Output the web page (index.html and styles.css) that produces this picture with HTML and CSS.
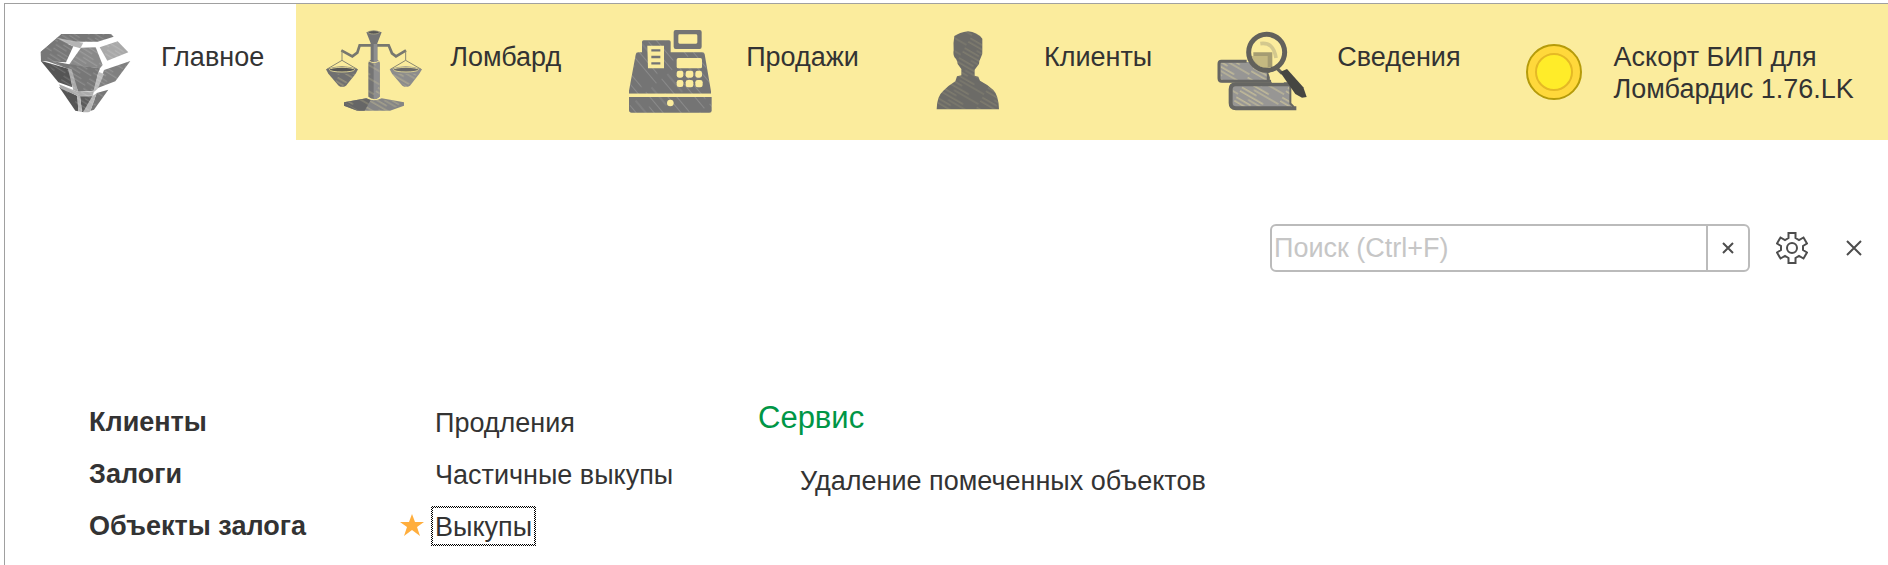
FILE: index.html
```html
<!DOCTYPE html>
<html lang="ru">
<head>
  <meta charset="UTF-8">
  <meta name="viewport" content="width=device-width, initial-scale=1.0">
  <title>Ломбард</title>
  <link rel="stylesheet" href="styles.css">
</head>
<body>
  <div class="window">
    <nav class="sections">
      <a class="section active" href="#main">
        <svg class="section-icon" viewBox="108 72 288 288" aria-hidden="true">
          <defs>
            <pattern id="hatch" width="70" height="34" patternUnits="userSpaceOnUse" patternTransform="rotate(32)">
              <path d="M0 5H50M20 15H70M0 26H38" stroke="#fff" stroke-width="2" opacity=".28"/>
            </pattern>
            <pattern id="hatchSteep" width="150" height="62" patternUnits="userSpaceOnUse" patternTransform="rotate(50)">
              <path d="M0 10H130M40 31H150M0 50H70" stroke="#fff" stroke-width="3" opacity=".16"/>
            </pattern>
            <pattern id="hatchYellow" width="120" height="34" patternUnits="userSpaceOnUse" patternTransform="rotate(30)">
              <path d="M0 6H80M35 17H120M0 28H50" stroke="#fbec9d" stroke-width="3" opacity=".55"/>
            </pattern>
          </defs>
          <path d="M119 156L181 102H330L338 110L290 125H228Z" fill="#777"/>
          <path d="M119 156L165 117L217 139L195 187L120 183Z" fill="#777"/>
          <path d="M165 113L247 128L238 145L216 139Z" fill="#b5b5b5"/>
          <path d="M240 143L284 142L305 195L297 205L204 194Z" fill="#898989"/>
          <path d="M296 142L350 124L382 157L319 182Z" fill="#a9a9a9"/>
          <path d="M119 182L205 207L214 262L172 247Z" fill="#555"/>
          <path d="M119 176L200 192L297 205L290 225L280 272L232 275L203 207Z" fill="#777"/>
          <path d="M200 204L212 208L232 276L217 270Z" fill="#a9a9a9"/>
          <path d="M309 210L388 183L343 244L290 264Z" fill="#808080"/>
          <path d="M292 215L309 222L290 266L276 278Z" fill="#bbb"/>
          <path d="M174 260L229 288L232 334L223 332Z" fill="#555"/>
          <path d="M174 253L232 276L278 274L276 287L231 288L180 266Z" fill="#aaa"/>
          <path d="M237 289H274L266 334L243 336Z" fill="#5c5c5c"/>
          <path d="M287 279L322 269L279 329L268 333Z" fill="#777"/>
          <path d="M229 288H237L243 336L232 334ZM274 288L287 280L268 334L262 337H246Z" fill="#b5b5b5"/>
          <path d="M119 156L181 102H330L388 183L322 269L268 335H232Z" fill="url(#hatch)"/>
        </svg>
        <span class="section-title">Главное</span>
      </a>
      <a class="section" href="#pawn">
        <svg class="section-icon" viewBox="108 72 288 288" aria-hidden="true">
          <path d="M154 151L187 169L202 158L209 136H296L306 160L318 169L348 151" fill="none" stroke="#77776f" stroke-width="8"/>
          <path d="M156 152V181L110 208M156 181L202 208M347 152V181L301 208M347 181L394 208" fill="none" stroke="#8a8870" stroke-width="3"/>
          <path d="M108 208Q156 190 204 208L197 221L168 257Q156 264 146 257L115 221Z" fill="#707070"/>
          <path d="M299 208Q347 190 396 208L388 221L360 257Q348 264 337 257L306 221Z" fill="#8c8c8c"/>
          <ellipse cx="156" cy="209" rx="38" ry="7" fill="#555" stroke="#d8ce93" stroke-width="3"/>
          <ellipse cx="348" cy="209" rx="38" ry="7" fill="#6a6a6a" stroke="#d8ce93" stroke-width="3"/>
          <path d="M229 97Q251 86 275 97L262 130V179Q269 182 269 190V290Q252 304 235 290V190Q235 182 242 179V130Z" fill="#747474"/>
          <path d="M251 132H262V179Q269 182 269 190V290Q262 298 251 298Z" fill="#8f8f8f"/>
          <ellipse cx="251" cy="97" rx="17" ry="5" fill="#555" stroke="#b9b28a" stroke-width="2"/>
          <path d="M237 183Q252 193 267 183" fill="none" stroke="#f0e29a" stroke-width="3"/>
          <path d="M162 307L229 295Q251 307 275 295L342 307V317L300 332H202L162 317Z" fill="#858585"/>
          <path d="M162 307L229 295L242 300L224 332H202L162 317Z" fill="#666"/>
          <path d="M115 221L197 221L156 262ZM306 221H388L348 262ZM235 190H269V290H235ZM162 307L229 297H275L342 307L300 332H202Z" fill="url(#hatchYellow)" opacity=".6"/>
        </svg>
        <span class="section-title">Ломбард</span>
      </a>
      <a class="section" href="#sales">
        <svg class="section-icon" viewBox="66 72 288 288" aria-hidden="true">
          <g fill="#747474">
            <path fill-rule="evenodd" d="M227 90H299Q305 90 305 96V140Q305 147 299 147H227Q221 147 221 140V96Q221 90 227 90ZM238 103Q235 103 235 107V127Q235 131 239 131H288Q292 131 292 127V107Q292 103 288 103Z"/>
            <path d="M131 121H207Q212 121 212 126V157H307Q313 157 314 163L333 274V281H87V272L107 164Q108 157 115 157H126V126Q126 121 131 121Z"/>
            <path d="M87 291H335V332Q335 338 328 338H95Q87 338 87 330Z"/>
          </g>
          <path d="M126 121H212V157H310L335 281V338H87V281L107 157H126Z" fill="url(#hatchSteep)"/>
          <path d="M86 281H336V291H86Z" fill="#fbec9d"/>
          <g fill="#fbec9d">
            <path d="M142 137H192V205H144Z"/>
            <rect x="230" y="174" width="76" height="31" rx="5"/>
            <rect x="230" y="212" width="20" height="21" rx="7"/>
            <rect x="257" y="212" width="23" height="21" rx="7"/>
            <rect x="286" y="212" width="20" height="21" rx="7"/>
            <rect x="230" y="240" width="20" height="21" rx="7"/>
            <rect x="257" y="240" width="23" height="22" rx="7"/>
            <rect x="286" y="240" width="22" height="22" rx="7"/>
            <circle cx="211" cy="309" r="10"/>
          </g>
          <path d="M154 151H181M154 171H181M154 190H181" stroke="#747474" stroke-width="7"/>
        </svg>
        <span class="section-title">Продажи</span>
      </a>
      <a class="section" href="#clients">
        <svg class="section-icon" viewBox="60 72 288 288" aria-hidden="true">
          <path d="M163 108Q178 98 204 94Q231 96 247 116V150Q249 164 242 174Q238 180 237 192L224 209V227L235 230L240 242Q264 254 280 270Q296 286 297 328H110Q110 289 130 272Q145 257 166 244L171 229L184 226V207L173 192Q171 178 165 174Q158 164 161 151Q159 129 163 108Z" fill="#6c6b67"/>
          <path d="M163 108Q178 98 204 94Q231 96 247 116V150Q249 164 242 174L237 192L224 209V227L235 230L240 242Q264 254 280 270Q296 286 297 328H110Q110 289 130 272Q145 257 166 244L171 229L184 226V207L173 192L165 174Z" fill="url(#hatchYellow)" opacity=".3"/>
        </svg>
        <span class="section-title">Клиенты</span>
      </a>
      <a class="section" href="#info">
        <svg class="section-icon" viewBox="39 72 288 288" aria-hidden="true">
          <path d="M58 186H207V247H58Z" fill="#979694"/>
          <path d="M95 254H273V325H95Z" fill="#979694"/>
          <path d="M62 188H205L204 243H62ZM98 258H271V320H98Z" fill="url(#hatchYellow)"/>
          <path d="M140 184H64Q57 184 57 192V235Q57 244 66 244H214M205 215V240" fill="none" stroke="#666663" stroke-width="9"/>
          <path d="M280 253H107Q92 253 92 268V309Q92 325 108 325H289" fill="none" stroke="#666663" stroke-width="12"/>
          <path d="M271 257V310L281 321" fill="none" stroke="#666663" stroke-width="6"/>
          <circle cx="200" cy="157" r="49" fill="#fbec9d"/>
          <path d="M160 157H217V200Q186 212 160 184Z" fill="#a59c72"/>
          <path d="M152 168H203V204Q170 204 152 168Z" fill="#c5b981"/>
          <path d="M181 131Q221 125 228 174" fill="none" stroke="#d3c88e" stroke-width="11"/>
          <circle cx="200" cy="157" r="54" fill="none" stroke="#62615b" stroke-width="15"/>
          <path d="M205 219L238 212L252 248H216Z" fill="#fbec9d"/>
          <path d="M229 203L247 221" stroke="#62615b" stroke-width="10"/>
          <path d="M240 216L261 207L310 262L320 291L306 293L286 282Z" fill="#464642"/>
        </svg>
        <span class="section-title">Сведения</span>
      </a>
      <a class="section" href="#askort">
        <svg class="section-icon small" viewBox="0 0 64 64" aria-hidden="true">
          <circle cx="32" cy="32" r="27" fill="#ffd83b" stroke="#b59b0a" stroke-width="2"/>
          <circle cx="32" cy="32" r="18" fill="#ffec29" stroke="#e5b925" stroke-width="2"/>
        </svg>
        <span class="section-title">Аскорт БИП для<br>Ломбардис 1.76.LK</span>
      </a>
    </nav>

    <div class="toolbar">
      <form class="search" role="search">
        <input class="search-input" type="text" placeholder="Поиск (Ctrl+F)" aria-label="Поиск">
        <button class="search-clear" type="reset" aria-label="Очистить">
          <svg width="12" height="12" viewBox="0 0 12 12"><path d="M1 1L11 11M11 1L1 11"/></svg>
        </button>
      </form>
      <button class="tool" type="button" aria-label="Настройка">
        <svg width="32" height="32" viewBox="0 0 32 32">
          <path d="M12.500 1H19.500V6L23 8L27.500 5.500L31 11.500L27 14V18L31 20.500L27.500 26.500L23 24L19.500 26V31H12.500V26L9 24L4.500 26.500L1 20.500L5 18V14L1 11.500L4.500 5.500L9 8L12.500 6Z"/>
          <circle cx="16" cy="16" r="5"/>
        </svg>
      </button>
      <button class="tool" type="button" aria-label="Закрыть">
        <svg width="16" height="16" viewBox="0 0 16 16"><path d="M1 1L15 15M15 1L1 15"/></svg>
      </button>
    </div>

    <main class="menu">
      <ul class="menu-column important">
        <li><a href="#">Клиенты</a></li>
        <li><a href="#">Залоги</a></li>
        <li><a href="#">Объекты залога</a></li>
      </ul>
      <ul class="menu-column">
        <li><a href="#">Продления</a></li>
        <li><a href="#">Частичные выкупы</a></li>
        <li>
          <svg class="star" width="26" height="24" viewBox="0 0 26 24" aria-hidden="true">
            <path d="M13 1L16 9H25L18 14L21 23L13 17L5 23L8 14L1 9H10Z"/>
          </svg>
          <a class="focused" href="#">Выкупы</a>
        </li>
      </ul>
      <section class="service">
        <h2>Сервис</h2>
        <ul class="menu-column">
          <li><a href="#">Удаление помеченных объектов</a></li>
        </ul>
      </section>
    </main>
  </div>
</body>
</html>
```

FILE: styles.css
```css
* {
  margin: 0;
  padding: 0;
  box-sizing: border-box;
}

body {
  font-family: "Liberation Sans", Arial, sans-serif;
  font-size: 27px;
  line-height: 32px;
  color: #333;
  background: #fff;
  padding: 3px 0 0 4px;
}

a {
  color: inherit;
  text-decoration: none;
}

ul {
  list-style: none;
}

.window {
  min-height: calc(100vh - 3px);
  border-top: 1px solid #a0a0a0;
  border-left: 1px solid #a0a0a0;
}

/* section panel */
.sections {
  display: flex;
  background: #fbec9d;
}

.section {
  display: flex;
  gap: 28px;
  min-height: 136px;
  padding: 0 31px 0 30px;
  white-space: nowrap;
}

.section.active {
  padding: 0 32px;
  background: #fff;
}

.section-icon {
  flex: none;
  align-self: center;
  width: 96px;
  height: 96px;
}

.section-icon.small {
  width: 64px;
  height: 64px;
}

.section-title {
  padding-top: 37px;
}

/* search and tools */
.toolbar {
  display: flex;
  justify-content: flex-end;
  align-items: center;
  gap: 22px;
  padding: 84px 14px 0;
}

.search {
  display: flex;
  width: 480px;
  height: 48px;
  border: 2px solid #bbb;
  border-radius: 6px;
}

.search-input {
  flex: 1;
  min-width: 0;
  padding: 0 2px;
  border: none;
  outline: none;
  background: none;
  font: inherit;
  color: inherit;
}

.search-input::placeholder {
  color: #c6c6c6;
}

button {
  display: flex;
  align-items: center;
  justify-content: center;
  border: none;
  background: none;
  cursor: pointer;
}

button svg {
  fill: none;
  stroke: #4d4d4d;
  stroke-width: 2;
}

.search-clear {
  width: 42px;
  border-left: 2px solid #bbb;
}

.tool {
  width: 40px;
  height: 40px;
}

/* commands */
.menu {
  display: grid;
  grid-template-columns: 346px 327px 1fr;
  padding: 130px 0 0 80px;
}

.menu-column {
  display: flex;
  flex-direction: column;
  gap: 12px;
}

.menu-column li {
  position: relative;
  display: flex;
}

.menu-column a {
  height: 40px;
  line-height: 38px;
  border: 2px solid transparent;
  padding: 0 2px;
}

.important a {
  line-height: 36px;
  font-weight: bold;
}

.menu-column .focused {
  background:
    linear-gradient(#fff, #fff) padding-box,
    repeating-conic-gradient(#000 0 25%, #fff 0 50%) 0 0 / 2px 2px border-box;
}

.star {
  position: absolute;
  right: 100%;
  top: 7px;
  margin-right: 6px;
  fill: #ffae3d;
}

.service h2 {
  font-size: 31px;
  font-weight: normal;
  line-height: 32px;
  color: #009646;
}

.service .menu-column {
  padding: 26px 0 0 38px;
}
```
